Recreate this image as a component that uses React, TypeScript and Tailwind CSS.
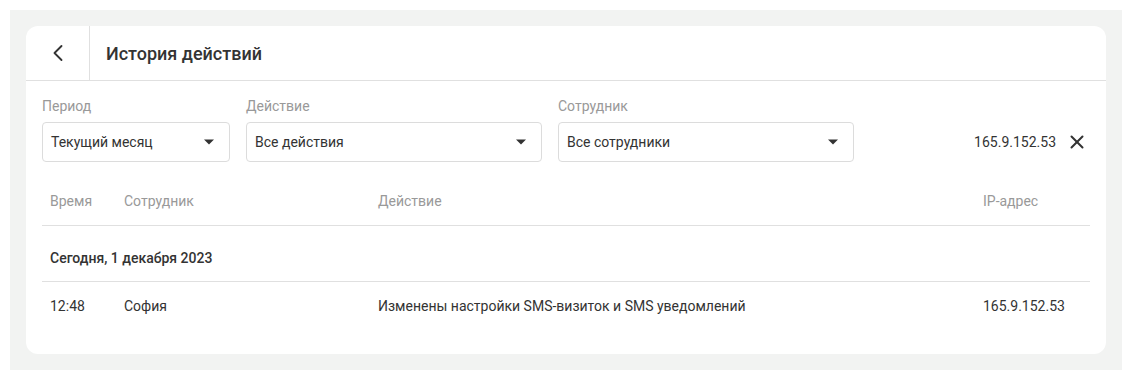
import { ChevronLeft, X } from 'lucide-react';

interface FilterSelectProps {
  label: string;
  value: string;
  width: string;
}

function FilterSelect({ label, value, width }: FilterSelectProps) {
  return (
    <div className={width}>
      <div className="text-[14px] leading-4 text-[#999999] mb-2">{label}</div>
      <div className="h-10 flex items-center justify-between pl-2 pr-3 border border-[#dcdcdc] rounded-[4px] bg-white">
        <span className="text-[14px] text-[#333333]">{value}</span>
        <svg width="10" height="6" viewBox="0 0 10 6" className="mr-[3px]">
          <path d="M0 0.5h10L5 5.5z" fill="#333333" />
        </svg>
      </div>
    </div>
  );
}

const rows = [
  { time: '12:48', user: 'София', action: 'Изменены настройки SMS-визиток и SMS уведомлений', ip: '165.9.152.53' },
];

export default function App() {
  return (
    <div className="bg-white p-[10px] font-['Roboto',sans-serif]">
      <div className="bg-[#f2f3f2] p-4 w-[1112px]">
        <div className="bg-white rounded-xl">
          <div className="flex h-[55px] border-b border-[#e0e0e0]">
            <button className="w-16 flex items-center justify-center border-r border-[#e0e0e0] text-[#333333]">
              <ChevronLeft size={28} strokeWidth={1.6} />
            </button>
            <h1 className="flex items-center pl-4 text-[18px] font-medium text-[#333333]">История действий</h1>
          </div>

          <div className="px-4 pt-[17px] pb-6">
            <div className="flex items-end gap-4">
              <FilterSelect label="Период" value="Текущий месяц" width="w-[188px]" />
              <FilterSelect label="Действие" value="Все действия" width="w-[296px]" />
              <FilterSelect label="Сотрудник" value="Все сотрудники" width="w-[296px]" />
              <div className="flex-1 h-10 flex items-center justify-end gap-[10px] pr-[2px]">
                <span className="text-[14px] text-[#333333]">165.9.152.53</span>
                <X size={22} strokeWidth={2.2} className="text-[#333333]" />
              </div>
            </div>

            <div className="mt-4 text-[14px]">
              <div className="grid grid-cols-[74px_254px_1fr_115px] h-12 items-center border-b border-[#e0e0e0] text-[#999999]">
                <div className="pl-2">Время</div>
                <div className="pl-2">Сотрудник</div>
                <div className="pl-2">Действие</div>
                <div className="pl-2">IP-адрес</div>
              </div>
              <div className="h-14 flex items-center pl-2 pt-[9px] border-b border-[#e0e0e0] font-medium text-[#333333]">
                Сегодня, 1 декабря 2023
              </div>
              {rows.map((r) => (
                <div key={r.time} className="grid grid-cols-[74px_254px_1fr_115px] h-12 pt-px items-center text-[#333333]">
                  <div className="pl-2">{r.time}</div>
                  <div className="pl-2">{r.user}</div>
                  <div className="pl-2">{r.action}</div>
                  <div className="pl-2">{r.ip}</div>
                </div>
              ))}
            </div>
          </div>
        </div>
      </div>
    </div>
  );
}
